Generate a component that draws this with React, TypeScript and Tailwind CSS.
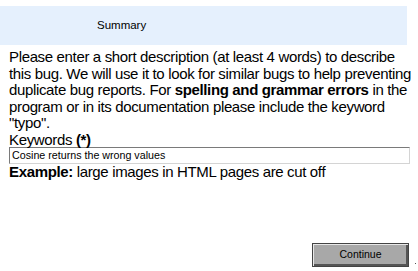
export default function App() {
  return (
    <div className="w-[418px] h-[271px] bg-white font-['Liberation_Sans',Arial,sans-serif] text-black overflow-hidden relative">
      <div className="mt-[6px] w-[407px] h-[39px] bg-[#e5f0fd] flex items-center pl-[97px] text-[11.5px]">
        Summary
      </div>
      <div className="w-[412px] pl-[9px] pt-[4px] text-[15px] leading-[16.5px] tracking-[-0.35px]">
        <p>
          Please enter a short description (at least 4 words) to describe this bug. We will use it to
          look for similar bugs to help preventing duplicate bug reports. For{" "}
          <b>spelling and grammar errors</b> in the program or in its documentation please include the
          keyword "typo".
        </p>
        <div className="leading-[15px]">
          Keywords <b>(*)</b>
        </div>
        <input
          className="block w-[401px] h-[17px] border border-[#7a7a7a] border-b-[#d4d4d4] border-r-[#d4d4d4] px-[2px] text-[10.7px] tracking-normal leading-none outline-none"
          defaultValue="Cosine returns the wrong values"
        />
        <div>
          <b>Example:</b> large images in HTML pages are cut off
        </div>
      </div>
      <div className="absolute left-[312px] top-[241px]">
        <button className="w-[97px] h-[24px] bg-[#a8a8a8] border border-[#444] shadow-[inset_1px_1px_0_#e8e8e8,inset_-2px_-2px_0_#555] text-[10.5px]">
          Continue
        </button>
      </div>
      <div className="absolute left-[415px] top-[263px] w-[1px] h-[1px] bg-[#555]" />
    </div>
  );
}
